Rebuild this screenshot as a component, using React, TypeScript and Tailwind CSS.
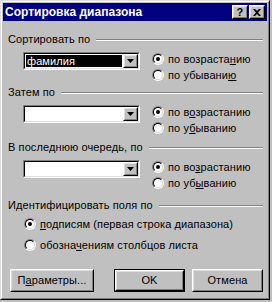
import React from "react";

const Radio = ({ checked }: { checked?: boolean }) => (
  <span className="block w-[12px] h-[12px] shrink-0 rounded-full border border-t-[#808080] border-l-[#808080] border-b-white border-r-white">
    <span className="flex items-center justify-center w-full h-full rounded-full border border-t-black border-l-black border-b-[#dfdfdf] border-r-[#dfdfdf] bg-white">
      {checked && <span className="block w-[4px] h-[4px] rounded-full bg-black" />}
    </span>
  </span>
);

const RadioRow = ({ checked, children, className = "" }: { checked?: boolean; children: React.ReactNode; className?: string }) => (
  <div className={"flex items-center h-[16px] " + className}>
    <Radio checked={checked} />
    <span className="ml-[4px] whitespace-nowrap">{children}</span>
  </div>
);

const Raised = ({ children, className = "" }: { children: React.ReactNode; className?: string }) => (
  <div className={"border border-t-white border-l-white border-b-black border-r-black " + className}>
    <div className="w-full h-full flex items-center justify-center border border-t-[#dfdfdf] border-l-[#dfdfdf] border-b-[#808080] border-r-[#808080] bg-[#c0c0c0]">
      {children}
    </div>
  </div>
);

const Combo = ({ value }: { value?: string }) => (
  <div className="w-[117px] h-[18px] border border-t-[#808080] border-l-[#808080] border-b-white border-r-white">
    <div className="flex w-full h-full border border-t-black border-l-black border-b-[#dfdfdf] border-r-[#dfdfdf] bg-white">
      <div className="flex-1 p-[1px]">
        {value && (
          <div className="h-full bg-black text-white leading-[12px] pl-[1px]">{value}</div>
        )}
      </div>
      <Raised className="w-[15px] h-full">
        <svg width="7" height="4" viewBox="0 0 7 4">
          <path d="M0 0h7L3.5 4z" fill="#000" />
        </svg>
      </Raised>
    </div>
  </div>
);

const GroupLabel = ({ children, className = "" }: { children: React.ReactNode; className?: string }) => (
  <div className={"flex items-center h-[13px] pl-[5px] pr-[4px] " + className}>
    <span className="whitespace-nowrap">{children}</span>
    <div className="flex-1 ml-[6px] border-t border-t-[#808080] border-b border-b-white" />
  </div>
);

const SortGroup = ({
  label,
  value,
  asc,
  desc,
  className = "",
}: {
  label: string;
  value?: string;
  asc: React.ReactNode;
  desc: React.ReactNode;
  className?: string;
}) => (
  <div className={className}>
    <GroupLabel>{label}</GroupLabel>
    <div className="flex mt-[5px] pl-[20px]">
      <div className="mt-[1px]">
        <Combo value={value} />
      </div>
      <div className="ml-[12px] flex flex-col">
        <RadioRow checked>{asc}</RadioRow>
        <RadioRow>{desc}</RadioRow>
      </div>
    </div>
  </div>
);

export default function App() {
  return (
    <div className="w-[272px] h-[302px] bg-[#c0c0c0] font-['Liberation_Sans',Arial,sans-serif] text-[11px] leading-[13px] text-black tracking-[0.1px]">
      <div className="w-[270px] h-[300px] border border-t-[#dfdfdf] border-l-[#dfdfdf] border-b-black border-r-black">
        <div className="w-full h-full border border-t-white border-l-white border-b-[#808080] border-r-[#808080] p-[1px]">
          {/* title bar */}
          <div className="h-[18px] bg-[#000080] flex items-center pl-[2px] pr-[2px]">
            <span className="flex-1 text-white font-bold text-[12px] tracking-normal">Сортировка диапазона</span>
            <Raised className="w-[16px] h-[14px]">
              <span className="font-bold text-[11px] leading-[10px]">?</span>
            </Raised>
            <Raised className="w-[16px] h-[14px] ml-[1px]">
              <svg width="8" height="7" viewBox="0 0 8 7">
                <path d="M0 0h2l2 2 2-2h2L5 3.5 8 7H6L4 5 2 7H0l3-3.5z" fill="#000" />
              </svg>
            </Raised>
          </div>

          <SortGroup
            className="mt-[12px]"
            label="Сортировать по"
            value="фамилия"
            asc={<>по возраста<u>н</u>ию</>}
            desc={<>по убывани<u>ю</u></>}
          />
          <SortGroup
            className="mt-[3px]"
            label="Затем по"
            asc={<>по в<u>о</u>зрастанию</>}
            desc={<>по у<u>б</u>ыванию</>}
          />
          <SortGroup
            className="mt-[5px]"
            label="В последнюю очередь, по"
            asc={<>по во<u>з</u>растанию</>}
            desc={<>по уб<u>ы</u>ванию</>}
          />

          <GroupLabel className="mt-[8px]">Идентифицировать поля по</GroupLabel>
          <div className="pl-[21px]">
            <RadioRow checked className="mt-[4px]">
              <u>п</u>одписям (первая строка диапазона)
            </RadioRow>
            <RadioRow className="mt-[5px]">
              обозна<u>ч</u>ениям столбцов листа
            </RadioRow>
          </div>

          <div className="flex mt-[16px] pl-[7px]">
            <Raised className="w-[84px] h-[23px]">
              <span>П<u>а</u>раметры...</span>
            </Raised>
            <div className="ml-[20px] border border-black">
              <Raised className="w-[69px] h-[21px]">
                <span>OK</span>
              </Raised>
            </div>
            <Raised className="ml-[7px] w-[71px] h-[23px]">
              <span>Отмена</span>
            </Raised>
          </div>
        </div>
      </div>
    </div>
  );
}
